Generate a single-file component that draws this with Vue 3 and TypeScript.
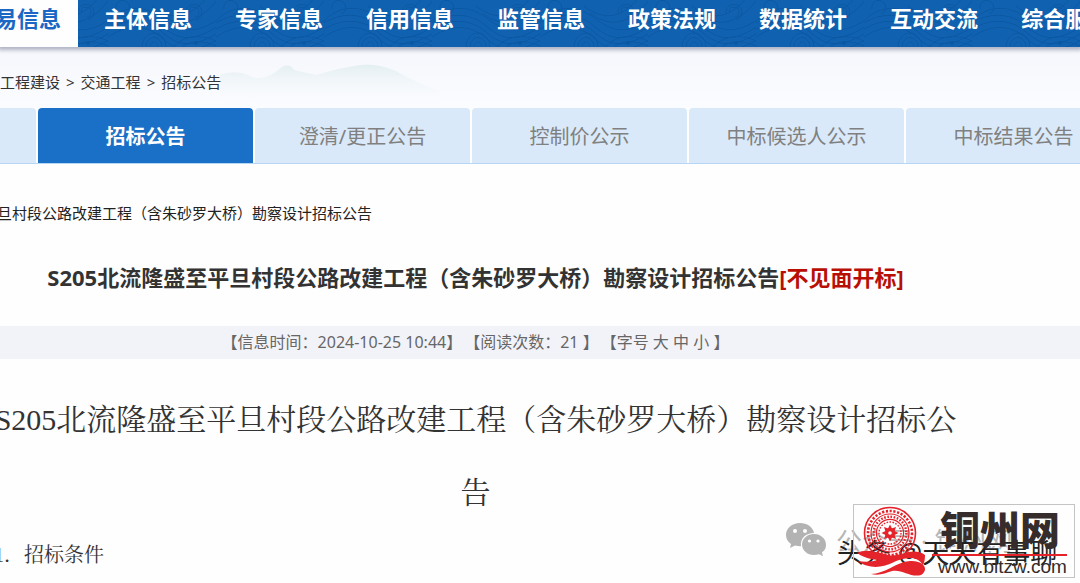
<script setup lang="ts">
const navItems: string[] = ['交易信息', '主体信息', '专家信息', '信用信息', '监管信息', '政策法规', '数据统计', '互动交流', '综合服务']
const tabs: string[] = ['招标计划', '招标公告', '澄清/更正公告', '控制价公示', '中标候选人公示', '中标结果公告']
const crumbs: string[] = ['工程建设', '交通工程', '招标公告']
const project = 'S205北流隆盛至平旦村段公路改建工程（含朱砂罗大桥）勘察设计招标公告'
const rays: number[] = [0, 45, 90, 135, 180, 225, 270, 315]
</script>

<template>
  <div class="page">
    <nav class="nav">
      <svg class="waves" aria-hidden="true">
        <defs>
          <pattern id="waves" width="108" height="48" patternUnits="userSpaceOnUse">
            <g fill="none" stroke="#0a57a4" stroke-width="1">
              <path d="M-20 50C0 18 34 14 54 32S92 48 128 20M-20 58C4 24 34 20 54 38S92 54 128 27M-20 43C0 12 34 8 54 26S92 42 128 13M-10 34C8 4 34 2 56 19S94 34 128 6M50 13q30 24 60-14M44 6q30 24 56-10" />
              <path d="M34 48c0-20 24-20 24 0M38 48c0-14 16-14 16 0M42 48c0-8 8-8 8 0M78 13a8 8 0 1 1 10 7M81 12a5 5 0 1 1 6 5M8 9a7 7 0 1 1 9 5M66 47c6-10 26-14 42-6M70 51c8-10 22-12 38-5" />
            </g>
            <circle cx="88" cy="43" r="2" fill="#0a57a4" />
          </pattern>
        </defs>
        <rect width="100%" height="100%" fill="url(#waves)" />
      </svg>
      <a v-for="(item, i) in navItems" :key="item" href="#" :class="['nav-item', { current: i === 0 }]">{{ item }}</a>
    </nav>

    <header class="head">
      <svg class="hills" viewBox="0 0 220 44" aria-hidden="true">
        <defs>
          <linearGradient id="mist" x1="0" y1="0" x2="0" y2="1">
            <stop offset="0" stop-color="#e4eff2" />
            <stop offset="1" stop-color="#f8fafd" stop-opacity="0" />
          </linearGradient>
        </defs>
        <path d="M0 14Q16 8 30 15T62 6Q70 2 74 9L96 14Q124 6 140 4T176 10Q196 22 220 30V44H0Z" fill="url(#mist)" />
      </svg>
      <div class="crumbs">
        <template v-for="(crumb, i) in crumbs" :key="crumb">
          <span v-if="i > 0">&gt;</span>
          <a href="#">{{ crumb }}</a>
        </template>
      </div>
    </header>

    <div class="tabs">
      <button v-for="(tab, i) in tabs" :key="tab" type="button" :class="['tab', { active: i === 1 }]">{{ tab }}</button>
    </div>

    <main>
      <p class="subject">{{ project.slice(10) }}</p>
      <h1>{{ project }}<span class="flag">[不见面开标]</span></h1>
      <div class="info">
        <span>【信息时间：2024-10-25 10:44】</span>
        <span>【阅读次数：21 】</span>
        <span>【字号 <a href="#">大</a> <a href="#">中</a> <a href="#">小</a> 】</span>
      </div>
      <article>
        <h2>{{ project }}</h2>
        <h3>1．招标条件</h3>
      </article>
    </main>

    <aside class="marks">
      <svg class="wechat" viewBox="0 0 42 34" aria-hidden="true">
        <path d="M15 1C7 1 1 6 1 13c0 4 2 7 5 9l-1 4 5-2.500q3 .8 6 .7C15 16 21 11 29 11 28 5 22 1 15 1Z" fill="#b3b3b3" />
        <path d="M29 12c-7 0-12 5-12 10.500S22 33 29 33q2.500 0 5-.8l4 2-1-4c3-2 4-4.500 4-7.500C41 17 36 12 29 12Z" fill="#b3b3b3" />
        <g fill="#fff"><circle cx="10" cy="9" r="2" /><circle cx="20" cy="9" r="2" /><circle cx="24.500" cy="19" r="1.600" /><circle cx="33" cy="19" r="1.600" /></g>
      </svg>
      <span class="account">公众号 · 铜州网</span>
      <span class="author">头条 @天天有事聊</span>
      <div class="brand">
        <svg class="seal" viewBox="0 0 74 72" aria-hidden="true">
          <g fill="none" stroke="#e5232b">
            <circle cx="36" cy="28" r="25.500" stroke-width="1.600" />
            <circle cx="36" cy="28" r="22" stroke-width="2.600" stroke-dasharray="2.200 1.600" />
            <circle cx="36" cy="28" r="19" stroke-width="1.200" />
            <circle cx="36" cy="28" r="16.300" stroke-width="2.400" stroke-dasharray="1.600 1.600" />
            <circle cx="36" cy="28" r="13.600" stroke-width="1.200" />
            <circle cx="36" cy="28" r="11" stroke-width="1.400" stroke-dasharray="1.600 1.400" />
          </g>
          <circle cx="36" cy="28" r="5" fill="#e5232b" />
          <path v-for="r in rays" :key="r" d="M33.300 25 36 19.500l2.700 5.500Z" fill="#e5232b" :transform="`rotate(${r} 36 28)`" />
          <circle cx="36" cy="28" r="1.800" fill="#fff" />
          <path d="M3 48C12 43 22 47 34 50S58 41 71 50C71 55 70 58 69 60 62 49 48 53 38 58S14 64 4 56Q14 58 24 55C14 54 7 51 3 48Z" fill="#e5232b" />
          <path d="M17 69C31 69 42 57 56 56 69 55 76 64 67 70 57 73 48 64 38 66 31 68 26 71 17 69Z" fill="#e5232b" />
        </svg>
        <div class="brand-text">
          <strong>铜州网</strong>
          <span>www.bltzw.com</span>
        </div>
      </div>
    </aside>
  </div>
</template>

<style>
body {
  margin: 0;
  background: #fefefe;
}
</style>

<style scoped>
.page {
  position: relative;
  min-height: 100vh;
  overflow: hidden;
  font-family: "Noto Sans", "Noto Sans CJK SC", sans-serif;
  color: #333;
}
a {
  color: inherit;
  text-decoration: none;
}
.nav {
  position: relative;
  display: flex;
  height: 47px;
  background: #1062b0;
  box-shadow: 0 1px 4px 2px rgba(70, 75, 110, 0.4);
  z-index: 1;
}
.waves {
  position: absolute;
  width: 100%;
  height: 100%;
}
.nav-item {
  position: relative;
  flex: none;
  margin-left: 43px;
  font-size: 22px;
  font-weight: 700;
  line-height: 36px;
  color: #fff;
}
.nav-item.current {
  margin: 0 -17px 0 -27px;
  padding-right: 17px;
  background: #fefefe;
  color: #1b68c4;
}
.head {
  position: relative;
  height: 61px;
  background: linear-gradient(#f6f7fc, #fbfcff);
}
.hills {
  position: absolute;
  left: 220px;
  top: 14px;
  width: 220px;
}
.crumbs {
  position: relative;
  display: flex;
  gap: 6px;
  padding-top: 24px;
  font-size: 15px;
  line-height: 22px;
}
.tabs {
  display: flex;
  gap: 2px;
  margin-left: -179px;
  border-bottom: 1px solid #b5d6f5;
}
.tab {
  flex: none;
  width: 215px;
  height: 55px;
  padding: 0;
  border: 0;
  border-radius: 4px 4px 0 0;
  background: #d9e9f9;
  color: #808080;
  font: inherit;
  font-size: 20px;
}
.tab.active {
  background: #1a70c6;
  color: #fff;
  font-weight: 700;
}
.subject {
  margin: 37px 0 0 -3px;
  font-size: 15px;
  line-height: 24px;
  color: #222;
}
h1 {
  margin: 35px 129px 0 0;
  font-size: 22px;
  line-height: 34px;
  text-align: center;
  white-space: nowrap;
}
.flag {
  color: #b90e04;
}
.info {
  display: flex;
  justify-content: center;
  gap: 2px;
  margin-top: 32px;
  padding-right: 129px;
  background: #f2f3f9;
  font-size: 16px;
  line-height: 33px;
  color: #666;
}
article {
  margin: 24px 113px 0 -16px;
  font-family: "Liberation Serif", "Noto Serif CJK SC", "Noto Sans CJK SC", serif;
}
h2 {
  margin: 0;
  font-size: 30px;
  font-weight: 400;
  line-height: 73px;
  text-align: center;
}
h3 {
  margin: 10px 0 0 10px;
  font-size: 20px;
  font-weight: 400;
  line-height: 32px;
}
.marks {
  position: absolute;
  right: 5px;
  bottom: 5px;
  width: 290px;
  height: 74px;
}
.wechat {
  position: absolute;
  left: 0;
  top: 18px;
  width: 42px;
}
.account,
.author {
  position: absolute;
  white-space: nowrap;
}
.account {
  left: 51px;
  top: 20px;
  font-size: 26px;
  line-height: 34px;
  color: #b5b5b5;
}
.author {
  left: 52px;
  top: 32px;
  font-size: 27px;
  line-height: 34px;
  color: #222;
  text-shadow: 0 0 2px #fff, 1px 1px 0 #fff;
}
.brand {
  position: absolute;
  right: 0;
  top: 0;
  display: flex;
  width: 220px;
  height: 72px;
  border: 1px solid #c4c4c4;
}
.seal {
  flex: none;
  width: 74px;
}
.brand-text {
  flex: 1;
  display: flex;
  flex-direction: column;
  margin: 0 7px 0 4px;
  color: #352c2b;
}
.brand-text strong {
  padding-left: 8px;
  font-size: 40px;
  font-weight: 900;
  line-height: 49px;
}
.brand-text span {
  padding-left: 6px;
  border-top: 2px solid #e5232b;
  font-family: "Liberation Sans", Arial, sans-serif;
  font-size: 19px;
  line-height: 22px;
}
</style>
